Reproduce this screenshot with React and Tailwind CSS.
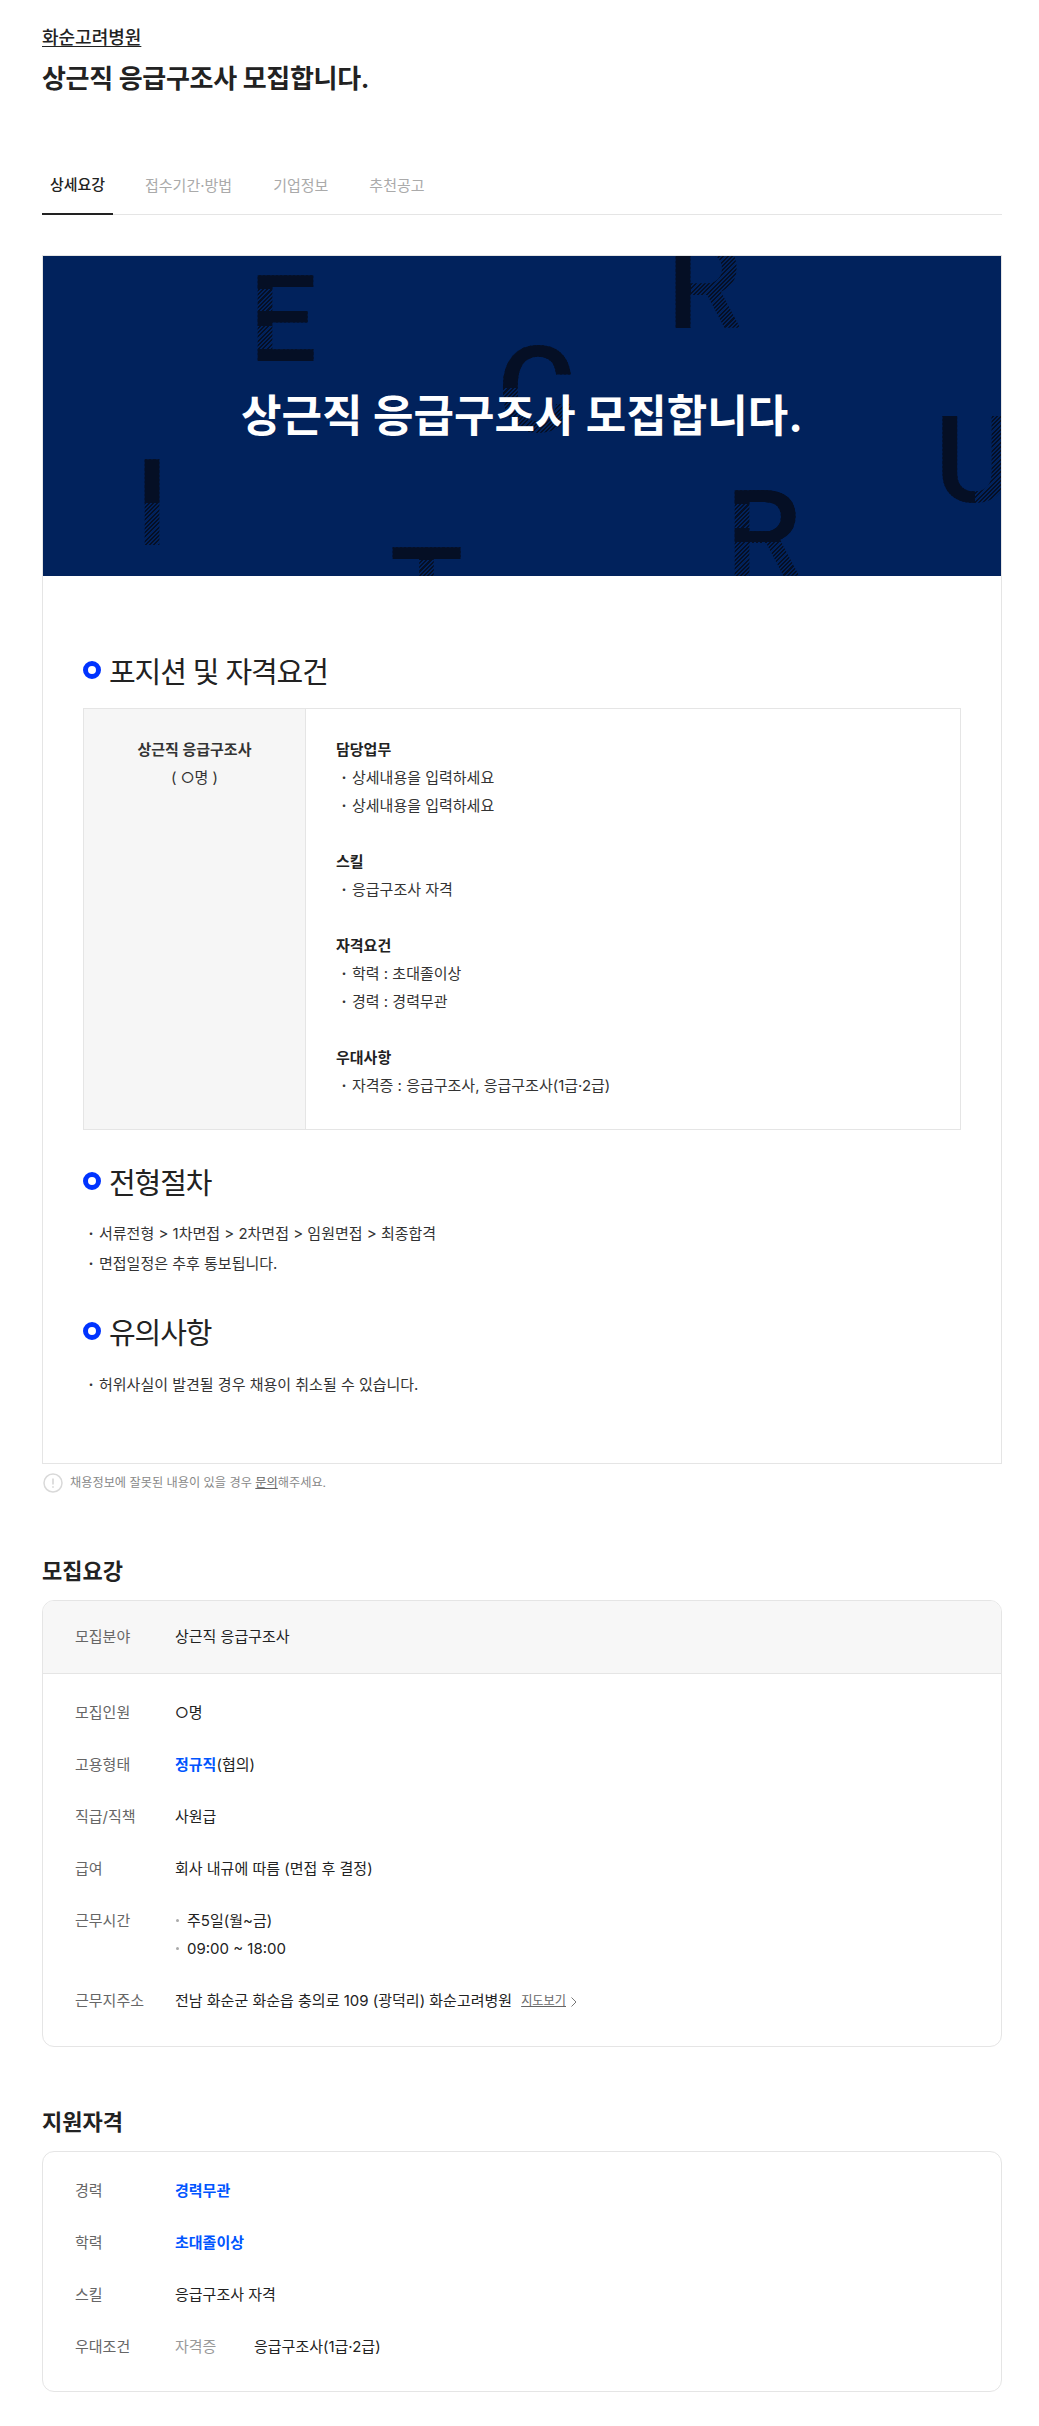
const TABS = ["접수기간·방법", "기업정보", "추천공고"];

const DUTIES = [
  { title: "담당업무", items: ["상세내용을 입력하세요", "상세내용을 입력하세요"] },
  { title: "스킬", items: ["응급구조사 자격"] },
  { title: "자격요건", items: ["학력 : 초대졸이상", "경력 : 경력무관"] },
  { title: "우대사항", items: ["자격증 : 응급구조사, 응급구조사(1급·2급)"] },
];

const SectionTitle = ({ children }) => (
  <h3 className="flex h-10 items-center pt-[2px] text-[29px] font-normal tracking-[-1.1px] text-[#222]">
    <span className="mr-2 -mt-[6px] h-[18px] w-[18px] rounded-full border-[5px] border-[#0033ff]" />
    {children}
  </h3>
);

const Bullet = ({ children }) => (
  <p className="flex">
    <span className="w-4 shrink-0 text-center font-bold">·</span>
    {children}
  </p>
);

const Row = ({ label, children, className = "" }) => (
  <div className={`flex text-[15px] leading-7 ${className}`}>
    <div className="w-[100px] shrink-0 text-[#666]">{label}</div>
    <div className="text-[#222]">{children}</div>
  </div>
);

const Letter = ({ className, children }) => (
  <span
    className={`absolute bg-clip-text font-['Roboto',sans-serif] text-[120px] font-medium leading-[120px] text-transparent ${className}`}
  >
    {children}
  </span>
);

const App = () => {
  return (
    <div className="w-[1039px] bg-white pb-[34px] pl-[42px] pr-[37px] pt-6 font-['Inter','Noto_Sans_CJK_KR',sans-serif] text-[#222]">
      {/* 상단 제목 */}
      <a className="block text-[18px] font-medium leading-7 text-[#222] underline underline-offset-2">화순고려병원</a>
      <h1 className="mt-[9px] text-[26px] font-bold leading-9 tracking-[-0.3px] text-[#222]">상근직 응급구조사 모집합니다.</h1>

      {/* 탭 */}
      <nav className="mt-[61px] flex h-[57px] border-b border-[#e5e5e5] text-[15px]">
        <div className="flex h-[57px] w-[71px] items-center justify-center border-b-2 border-[#222] font-medium text-[#222]">
          상세요강
        </div>
        <div className="ml-[32px] flex gap-[41px] pt-[14px] leading-7 text-[#aaa]">
          {TABS.map((tab) => (
            <span key={tab}>{tab}</span>
          ))}
        </div>
      </nav>

      {/* 상세요강 본문 */}
      <section className="mt-10 border border-[#e5e5e5]">
        <div className="relative flex h-[320px] items-center justify-center overflow-hidden bg-[#01225c]">
          <Letter className="left-[206px] top-[4px] bg-[linear-gradient(to_bottom,#050f25_29px,transparent_29px,transparent_51px,#050f25_51px,#050f25_66px,transparent_66px,transparent_89px,#050f25_89px),repeating-linear-gradient(135deg,#050f25_0,#050f25_1.5px,transparent_1.5px,transparent_3px)]">
            E
          </Letter>
          <Letter className="left-[624px] top-[-29px] bg-[linear-gradient(to_right,#050f25_24px,transparent_24px),repeating-linear-gradient(135deg,#050f25_0,#050f25_1.5px,transparent_1.5px,transparent_3px)]">
            R
          </Letter>
          <Letter className="left-[454px] top-[75px] bg-[linear-gradient(to_bottom,#050f25_57px,transparent_57px),repeating-linear-gradient(135deg,#050f25_0,#050f25_1.5px,transparent_1.5px,transparent_3px)]">
            C
          </Letter>
          <Letter className="left-[92px] top-[188px] bg-[linear-gradient(to_bottom,#050f25_59px,transparent_59px),repeating-linear-gradient(135deg,#050f25_0,#050f25_1.5px,transparent_1.5px,transparent_3px)]">
            I
          </Letter>
          <Letter className="left-[347px] top-[276px] bg-[linear-gradient(to_bottom,#050f25_28px,transparent_28px),repeating-linear-gradient(135deg,#050f25_0,#050f25_1.5px,transparent_1.5px,transparent_3px)]">
            T
          </Letter>
          <Letter className="left-[683px] top-[219px] bg-[linear-gradient(to_bottom,#050f25_29px,transparent_29px,transparent_53px,#050f25_53px,#050f25_67px,transparent_67px),linear-gradient(to_right,transparent_24px,#050f25_24px),repeating-linear-gradient(135deg,#050f25_0,#050f25_1.5px,transparent_1.5px,transparent_3px)] bg-no-repeat [background-size:100%_100%,100%_67px,100%_100%]">
            R
          </Letter>
          <Letter className="left-[892px] top-[145px] bg-[linear-gradient(to_right,#050f25_40px,transparent_40px),repeating-linear-gradient(135deg,#050f25_0,#050f25_1.5px,transparent_1.5px,transparent_3px)]">
            U
          </Letter>
          <h2 className="relative text-[44px] font-bold leading-[56px] text-white">상근직 응급구조사 모집합니다.</h2>
        </div>

        <div className="px-10 pb-[63px] pt-[76px]">
          <SectionTitle>포지션 및 자격요건</SectionTitle>

          <div className="mt-4 flex h-[422px] border border-[#e5e5e5] text-[15px] leading-7">
            <div className="w-[222px] shrink-0 border-r border-[#e5e5e5] bg-[#f6f6f6] pt-[27px] text-center">
              <p className="font-bold text-[#333]">상근직 응급구조사</p>
              <p className="text-[#333]">( ○명 )</p>
            </div>
            <div className="flex flex-col gap-7 pl-[30px] pt-[27px] text-[#333]">
              {DUTIES.map((duty) => (
                <div key={duty.title}>
                  <p className="font-bold text-[#222]">{duty.title}</p>
                  {duty.items.map((item, i) => (
                    <Bullet key={i}>{item}</Bullet>
                  ))}
                </div>
              ))}
            </div>
          </div>

          <div className="mt-[33px]">
            <SectionTitle>전형절차</SectionTitle>
          </div>
          <div className="mt-4 text-[15px] leading-[30px] text-[#333]">
            <Bullet>서류전형 &gt; 1차면접 &gt; 2차면접 &gt; 임원면접 &gt; 최종합격</Bullet>
            <Bullet>면접일정은 추후 통보됩니다.</Bullet>
          </div>

          <div className="mt-[34px]">
            <SectionTitle>유의사항</SectionTitle>
          </div>
          <div className="mt-[17px] text-[15px] leading-[30px] text-[#333]">
            <Bullet>허위사실이 발견될 경우 채용이 취소될 수 있습니다.</Bullet>
          </div>
        </div>
      </section>

      {/* 안내 문구 */}
      <div className="mt-[9px] flex h-5 items-center text-[12.2px] text-[#888]">
        <svg className="ml-px mr-[7px]" width="20" height="20" viewBox="0 0 20 20" fill="none">
          <circle cx="10" cy="10" r="9" stroke="#d9d9d9" strokeWidth="1.5" />
          <path d="M10 5.5v6" stroke="#d0d0d0" strokeWidth="1.4" />
          <path d="M10 13.2v1.6" stroke="#d0d0d0" strokeWidth="1.4" />
        </svg>
        <span>
          채용정보에 잘못된 내용이 있을 경우 <a className="text-[#666] underline">문의</a>해주세요.
        </span>
      </div>

      {/* 모집요강 */}
      <h2 className="mt-[62px] text-[22px] font-bold leading-8 text-[#222]">모집요강</h2>
      <div className="mt-[13px] overflow-hidden rounded-xl border border-[#e5e5e5]">
        <div className="flex h-[73px] items-center border-b border-[#e5e5e5] bg-[#f7f7f7] px-8">
          <Row label="모집분야">상근직 응급구조사</Row>
        </div>
        <div className="flex flex-col gap-6 px-8 pb-[31px] pt-[25px]">
          <Row label="모집인원">○명</Row>
          <Row label="고용형태">
            <b className="font-bold text-[#0055ff]">정규직</b>(협의)
          </Row>
          <Row label="직급/직책">사원급</Row>
          <Row label="급여">회사 내규에 따름 (면접 후 결정)</Row>
          <Row label="근무시간">
            <p className="flex items-center">
              <span className="-mt-px ml-px mr-[8px] h-[3px] w-[3px] rounded-full bg-[#aaa]" />
              주5일(월~금)
            </p>
            <p className="flex items-center">
              <span className="-mt-px ml-px mr-[8px] h-[3px] w-[3px] rounded-full bg-[#aaa]" />
              09:00 ~ 18:00
            </p>
          </Row>
          <Row label="근무지주소">
            <span className="flex items-center">
              전남 화순군 화순읍 충의로 109 (광덕리) 화순고려병원
              <a className="ml-[9px] text-[12.2px] text-[#666] underline">지도보기</a>
              <svg className="ml-[4px] mt-[2px]" width="8" height="12" viewBox="0 0 8 12" fill="none">
                <path d="M1.5 1.5L6 6l-4.5 4.5" stroke="#777" strokeWidth="1" />
              </svg>
            </span>
          </Row>
        </div>
      </div>

      {/* 지원자격 */}
      <h2 className="mt-[59px] text-[22px] font-bold leading-8 text-[#222]">지원자격</h2>
      <div className="mt-[13px] flex flex-col gap-6 rounded-xl border border-[#e5e5e5] px-8 pb-[30px] pt-[25px]">
        <Row label="경력">
          <b className="font-bold text-[#0055ff]">경력무관</b>
        </Row>
        <Row label="학력">
          <b className="font-bold text-[#0055ff]">초대졸이상</b>
        </Row>
        <Row label="스킬">응급구조사 자격</Row>
        <Row label="우대조건">
          <span className="inline-block w-[79px] text-[#999]">자격증</span>응급구조사(1급·2급)
        </Row>
      </div>
    </div>
  );
};

export default App;
